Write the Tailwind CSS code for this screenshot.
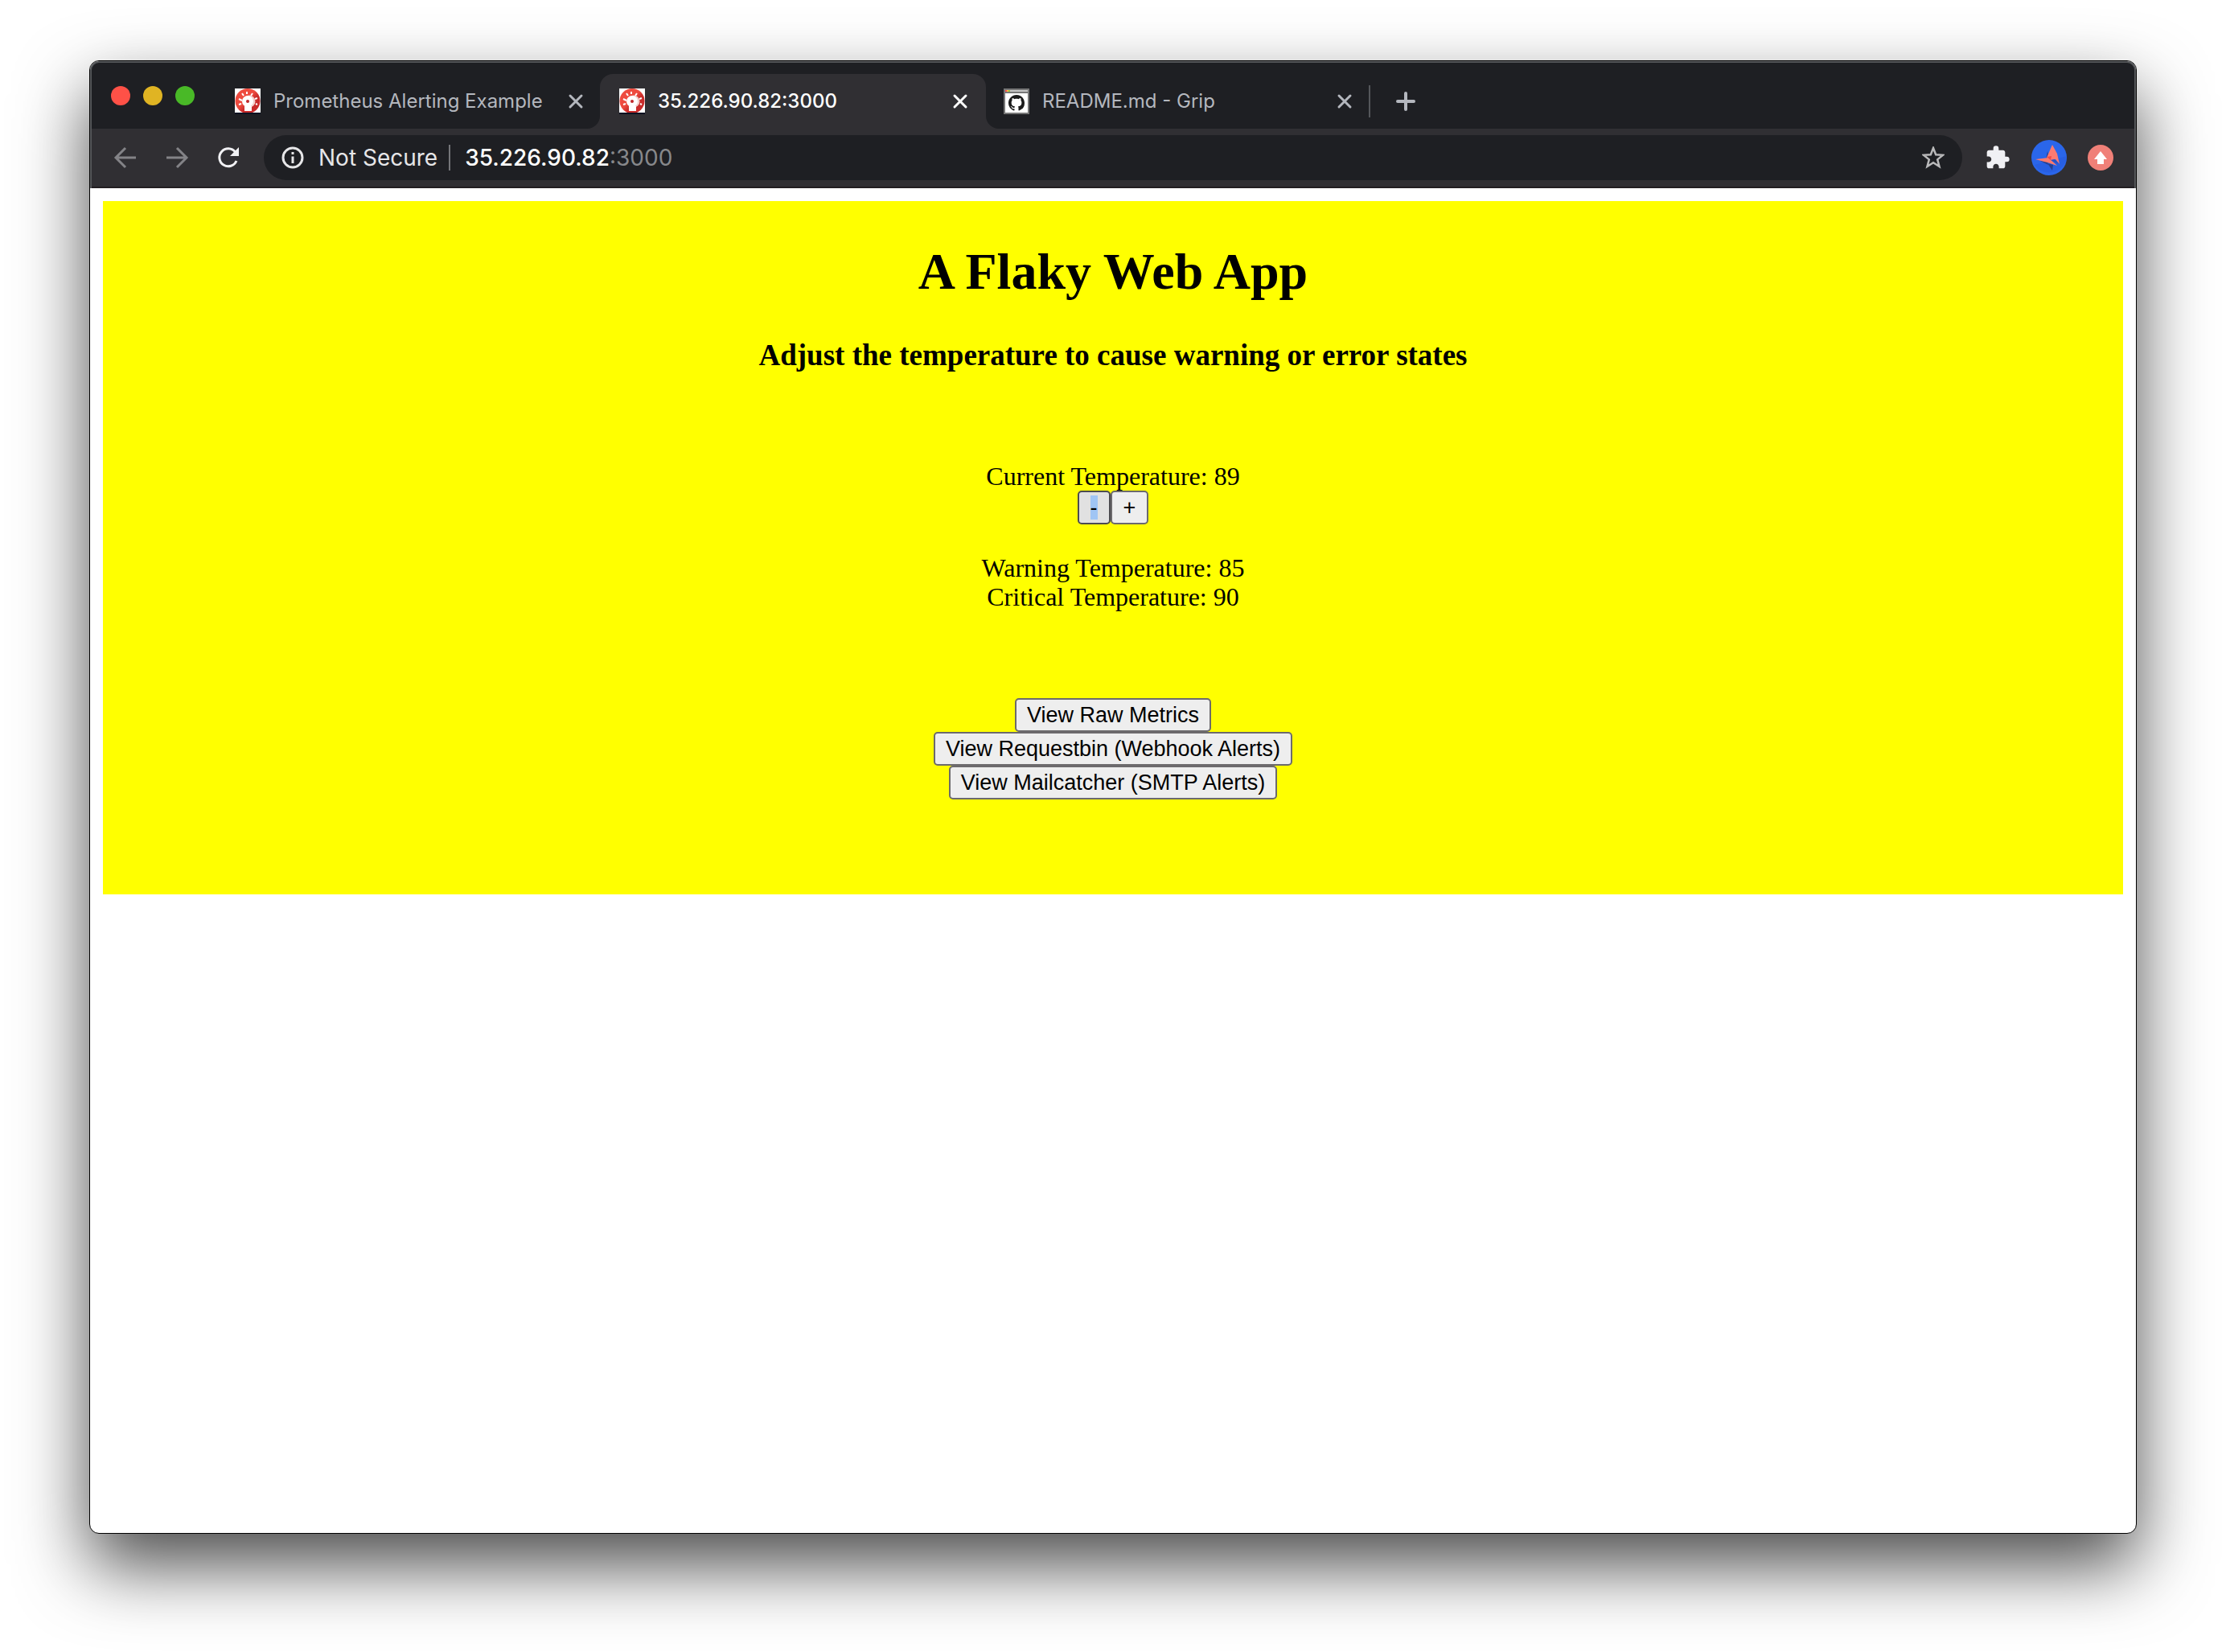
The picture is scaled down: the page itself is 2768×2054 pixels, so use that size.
<!DOCTYPE html>
<html lang="en">
<head>
<meta charset="utf-8">
<title>35.226.90.82:3000</title>
<script src="https://cdn.jsdelivr.net/npm/@tailwindcss/browser@4"></script>
</head>
<body class="bg-white">
<svg class="absolute size-0" aria-hidden="true">
  <defs>
    <linearGradient id="red" x1="0" y1="0" x2="1" y2="1"><stop offset="0.45" stop-color="#ee4b3f"/><stop offset="0.6" stop-color="#c92c2b"/></linearGradient>
    <symbol id="bell" viewBox="0 0 32 32">
      <rect width="32" height="32" fill="#fff"/>
      <circle cx="16" cy="15.500" r="15.500" fill="url(#red)"/>
      <rect y="30" width="32" height="2" fill="#0c1222"/>
      <path d="M15 4v3M9 6l2 3M22 6l-2 3M5 13l4 2M28 12l-3 1M5 20l3-1M28 20l-2-1" stroke="#fff" stroke-width="2"/>
      <circle cx="18" cy="16" r="7.500" fill="#f3cfcb"/>
      <path d="M12 22h9v6h-9z" fill="#fff"/>
      <circle cx="16" cy="16" r="7" fill="#fff"/>
      <circle cx="16" cy="16" r="2" fill="#c0282a"/>
    </symbol>
    <symbol id="close" viewBox="0 0 20 20"><path d="M3 3l14 14M17 3L3 17" stroke="currentColor" stroke-width="3" stroke-linecap="round"/></symbol>
  </defs>
</svg>
<div class="flex min-h-screen flex-col px-[111px] pt-[75px] pb-[147px]">
  <div class="flex grow flex-col overflow-hidden rounded-[12px] border border-black bg-white shadow-[0_40px_88px_rgba(0,0,0,0.7)]">
    <header class="flex flex-col rounded-t-[11px] border-x-2 border-t-2 border-[#55575a] bg-[#1e1f23] font-['Inter',sans-serif]">
      <div class="flex h-[82px] items-end pl-6">
        <div class="flex h-[68px] w-[130px] shrink-0 items-start gap-4 pt-[15px]">
          <button aria-label="Close window" class="size-6 rounded-full bg-[#ff5147]"></button>
          <button aria-label="Minimize window" class="size-6 rounded-full bg-[#e0b423]"></button>
          <button aria-label="Zoom window" class="size-6 rounded-full bg-[#49b927]"></button>
        </div>
        <nav class="flex">
          <div class="flex h-[68px] w-[478px] items-center pr-5 pl-6 text-[#b4b7be]">
            <svg class="size-8"><use href="#bell"/></svg>
            <a href="#" class="ml-4 grow text-[24px] leading-8">Prometheus Alerting Example</a>
            <button aria-label="Close tab"><svg class="size-5"><use href="#close"/></svg></button>
          </div>
          <div class="relative flex h-[68px] w-[480px] items-center rounded-t-[16px] bg-[#302f33] pr-[22px] pl-6 text-white">
            <svg class="absolute bottom-0 -left-4 size-4" viewBox="0 0 16 16"><path d="M16 0v16H0A16 16 0 0 0 16 0z" fill="#302f33"/></svg>
            <svg class="absolute -right-4 bottom-0 size-4" viewBox="0 0 16 16"><path d="M0 0v16h16A16 16 0 0 1 0 0z" fill="#302f33"/></svg>
            <svg class="size-8"><use href="#bell"/></svg>
            <a href="#" class="ml-4 grow text-[24px] leading-8 font-medium">35.226.90.82:3000</a>
            <button aria-label="Close tab"><svg class="size-5"><use href="#close"/></svg></button>
          </div>
          <div class="flex h-[68px] w-[476px] items-center pr-5 pl-[22px] text-[#b4b7be]">
            <svg class="size-8" viewBox="0 0 32 32">
              <rect width="32" height="32" fill="#777"/><rect x="2" y="6" width="28" height="24" fill="#fff"/>
              <rect x="2" y="2" width="28" height="2" fill="#c4c4c4"/><rect x="2" y="2" width="2" height="2" fill="#f55"/><rect x="4" y="2" width="2" height="2" fill="#fb4"/><rect x="6" y="2" width="2" height="2" fill="#9c4"/>
              <g transform="translate(6 8) scale(1.25)"><path fill="#1b1b1b" d="M8 0C3.58 0 0 3.58 0 8c0 3.54 2.29 6.53 5.47 7.59.4.07.55-.17.55-.38 0-.19-.01-.82-.01-1.49-2.01.37-2.53-.49-2.69-.94-.09-.23-.48-.94-.82-1.13-.28-.15-.68-.52-.01-.53.63-.01 1.08.58 1.23.82.72 1.21 1.87.87 2.33.66.07-.52.28-.87.51-1.07-1.78-.2-3.64-.89-3.64-3.95 0-.87.31-1.59.82-2.15-.08-.2-.36-1.02.08-2.12 0 0 .67-.21 2.2.82.64-.18 1.32-.27 2-.27s1.36.09 2 .27c1.53-1.04 2.2-.82 2.2-.82.44 1.1.16 1.92.08 2.12.51.56.82 1.27.82 2.15 0 3.07-1.87 3.75-3.65 3.95.29.25.54.73.54 1.48 0 1.07-.01 1.93-.01 2.2 0 .21.15.46.55.38A8.01 8.01 0 0 0 16 8c0-4.42-3.58-8-8-8z"/></g>
            </svg>
            <a href="#" class="ml-4 grow text-[24px] leading-8">README.md - Grip</a>
            <button aria-label="Close tab"><svg class="size-5"><use href="#close"/></svg></button>
          </div>
        </nav>
        <div class="flex h-[68px] items-center gap-8 text-[#b4b7be]">
          <div class="h-10 w-[2px] bg-[#54565a]"></div>
          <button aria-label="New tab"><svg class="size-6" viewBox="0 0 24 24"><path d="M12 2v20M2 12h20" stroke="currentColor" stroke-width="4" stroke-linecap="round"/></svg></button>
        </div>
      </div>
      <div class="flex h-[74px] items-center border-b-2 border-[#221e21] bg-[#302f33] pr-[26px] pl-[26px]">
        <div class="flex items-center gap-8 text-[#838387]">
          <button aria-label="Back"><svg class="size-8" viewBox="0 0 32 32" fill="none" stroke="currentColor" stroke-width="3"><path d="M29 16H4M16 4L4 16l12 12"/></svg></button>
          <button aria-label="Forward"><svg class="size-8" viewBox="0 0 32 32" fill="none" stroke="currentColor" stroke-width="3"><path d="M3 16h25M16 4l12 12-12 12"/></svg></button>
          <button aria-label="Reload" class="text-[#f1f1f4]"><svg class="size-8" viewBox="0 0 32 32"><path d="M26 20A11 11 0 1 1 24.500 9" fill="none" stroke="currentColor" stroke-width="3"/><path d="M29 3v11H18z" fill="currentColor"/></svg></button>
        </div>
        <div class="ml-7 flex h-14 grow items-center rounded-full bg-[#1e1f23] px-[22px] text-[28px] leading-9">
          <svg class="size-7" viewBox="0 0 28 28"><circle cx="14" cy="14" r="12" fill="none" stroke="#e6e6e8" stroke-width="3"/><path d="M12.500 12.500h3V21h-3zM12.500 7h3v3h-3z" fill="#e6e6e8"/></svg>
          <button class="ml-[18px] text-[#e6e6e8]">Not Secure</button>
          <div class="mr-[18px] ml-[14px] h-8 w-[2px] bg-[#747579]"></div>
          <div class="grow text-[#87888b]" role="textbox" aria-label="Address"><span class="font-medium text-white">35.226.90.82</span>:3000</div>
          <button aria-label="Bookmark this tab"><svg class="size-7" viewBox="0 0 28 28"><path d="M14 2l3.200 8.300 8.800.5-6.800 5.600L21.500 25 14 20.200 6.500 25l2.300-8.600L2 10.800l8.800-.5z" fill="none" stroke="#b9b9ba" stroke-width="2.500"/></svg></button>
        </div>
        <div class="ml-7 flex items-center gap-[26px]">
          <button aria-label="Extensions"><svg class="size-8" viewBox="0 0 24 24"><path fill="#f0f0f4" d="M20.500 11H19V7c0-1.100-.9-2-2-2h-4V3.500a2.500 2.500 0 0 0-5 0V5H4c-1.100 0-1.990.9-1.990 2v3.800H3.500c1.490 0 2.700 1.210 2.700 2.700s-1.210 2.700-2.700 2.700H2V20c0 1.100.9 2 2 2h3.800v-1.500c0-1.490 1.210-2.700 2.700-2.700s2.700 1.210 2.700 2.700V22H17c1.100 0 2-.9 2-2v-4h1.500a2.500 2.500 0 0 0 0-5z"/></svg></button>
          <button aria-label="Profile"><svg class="size-11" viewBox="0 0 44 44"><circle cx="22" cy="22" r="22" fill="#2a66ea"/><path d="M44 20a22 22 0 0 1-40 11z" fill="#285fe2"/><path d="M20 14l2 8-4 3zM11 26l9 1 1 4zM20 29l6 9 1-7z" fill="#27408f"/><path d="M26 6l-7 16 6 3 5-1 5 6-3-13z" fill="#fb7b70"/><path d="M5 24l16-2 11 10-12-4z" fill="#ff7a6c"/><path d="M24 25l5-1 5 6z" fill="#2a50c0"/><path d="M19 21l6-1-1 5z" fill="#ef4a45"/></svg></button>
          <button aria-label="Update"><svg class="size-8" viewBox="0 0 32 32"><circle cx="16" cy="16" r="16" fill="#f08078"/><path d="M16 8l8 10h-4v6h-8v-6H8z" fill="#fff"/></svg></button>
        </div>
      </div>
    </header>
    <main class="p-4">
      <div class="flex flex-col items-center bg-[#ffff00] pt-[52px] pb-[118px] font-['Liberation_Serif',serif] text-[32px] leading-9 text-black">
        <h1 class="text-[64px] leading-[72px] font-bold">A Flaky Web App</h1>
        <h3 class="mt-[47px] text-[37px] leading-[42px] font-bold">Adjust the temperature to cause warning or error states</h3>
        <p class="mt-[111px]">Current Temperature: 89</p>
        <div class="flex font-['Liberation_Sans',sans-serif] text-[27px] leading-[30px]">
          <button class="h-[42px] rounded-[5px] border-2 border-[#4c4b4f] bg-[#e1e1e1] px-[14px]"><span class="block bg-[#a0c5f4]">-</span></button>
          <button class="h-[42px] rounded-[5px] border-2 border-[#6c6a6c] bg-[#eeeeee] px-[14px]">+</button>
        </div>
        <p class="mt-9">Warning Temperature: 85</p>
        <p>Critical Temperature: 90</p>
        <div class="mt-[108px] flex flex-col items-center font-['Liberation_Sans',sans-serif] text-[27px] leading-[30px]">
          <button class="h-[42px] rounded-[5px] border-2 border-[#6c6a6c] bg-[#eeeeee] px-[13px]">View Raw Metrics</button>
          <button class="h-[42px] rounded-[5px] border-2 border-[#6c6a6c] bg-[#eeeeee] px-[13px]">View Requestbin (Webhook Alerts)</button>
          <button class="h-[42px] rounded-[5px] border-2 border-[#6c6a6c] bg-[#eeeeee] px-[13px]">View Mailcatcher (SMTP Alerts)</button>
        </div>
      </div>
    </main>
  </div>
</div>
</body>
</html>
